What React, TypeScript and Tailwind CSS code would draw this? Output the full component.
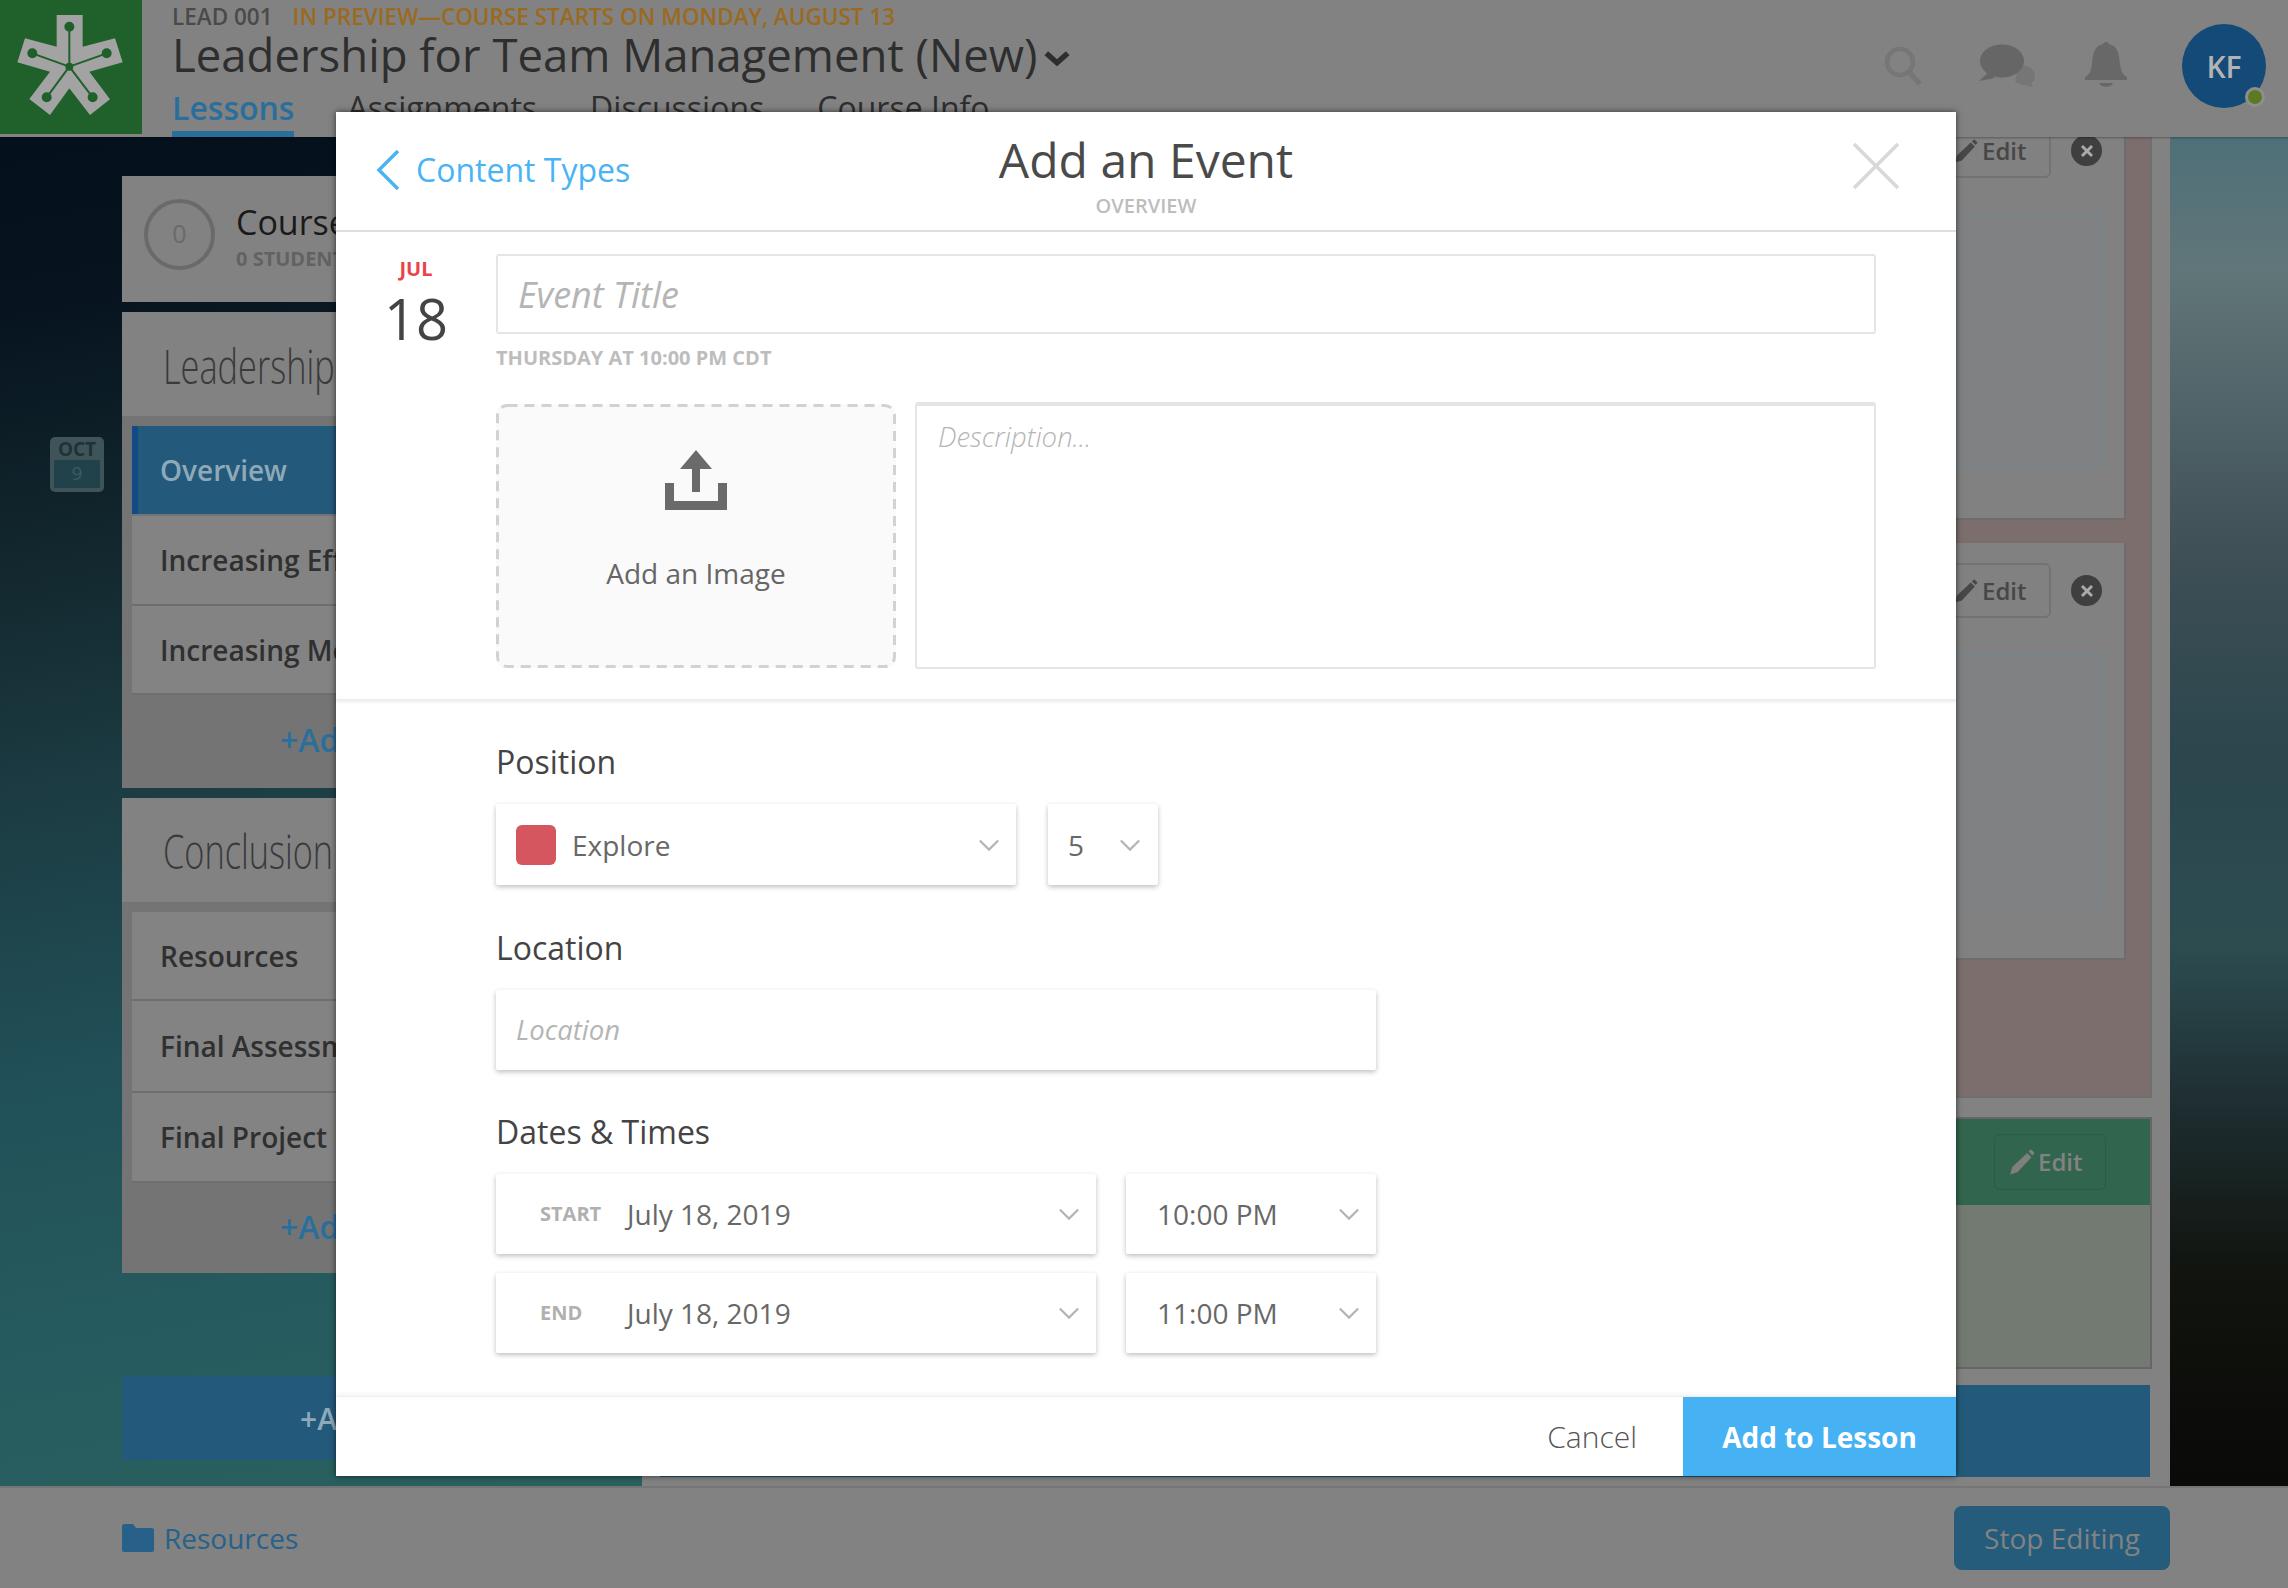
import React from "react";

const Chevron = ({ className = "" }: { className?: string }) => (
  <svg viewBox="0 0 24 14" className={`w-[22px] h-[13px] ${className}`} fill="none" stroke="#b4b4b4" strokeWidth="2.4">
    <polyline points="2,2 12,12 22,2" />
  </svg>
);

const Pencil = ({ className = "", color = "#474747" }: { className?: string; color?: string }) => (
  <svg viewBox="0 0 24 24" className={className} fill={color}>
    <path d="M1 23.5l2-7L16.8 3.6l4 4L7.8 21.4 1 23.5z" />
    <path d="M18 2.4l1.2-1.2c.6-.6 1.4-.6 2 0l1.6 1.6c.6.6.6 1.4 0 2L21.6 6 18 2.4z" />
  </svg>
);

const Logo = () => (
  <svg viewBox="0 0 426 402" className="w-[142px] h-[134px]">
    <polygon
      points="170,45 248,45 248,140 345,115 368,187 268,215 330,298 270,345 208,265 150,345 88,297 150,215 52,187 75,115 170,140"
      fill="#a3a3a3"
    />
    <g stroke="#20602a" strokeWidth="6" fill="#20602a">
      <line x1="208" y1="200" x2="208" y2="80" />
      <line x1="208" y1="200" x2="320" y2="160" />
      <line x1="208" y1="200" x2="97" y2="160" />
      <line x1="208" y1="200" x2="278" y2="292" />
      <line x1="208" y1="200" x2="140" y2="292" />
      <circle cx="208" cy="80" r="12" />
      <circle cx="320" cy="160" r="12" />
      <circle cx="97" cy="160" r="12" />
      <circle cx="278" cy="292" r="12" />
      <circle cx="140" cy="292" r="12" />
      <circle cx="208" cy="200" r="9" />
    </g>
  </svg>
);

const Row = ({ label, active = false, h }: { label: string; active?: boolean; h: string }) => (
  <div
    className={`${h} flex items-center whitespace-nowrap text-[28px] font-semibold ${
      active
        ? "bg-[#23597b] border-l-[6px] border-[#124a85] pl-[22px] text-[#8fa9b8]"
        : "bg-[#838383] border-b-2 border-[#6e6e6e] pl-[28px] text-[#303030]"
    }`}
  >
    {label}
  </div>
);

const CardToolbar = () => (
  <div className="flex items-center justify-end">
    <div className="h-[55px] w-[140px] border-2 border-[#737373] rounded-[6px] flex items-center pl-[41px] gap-[4px]">
      <Pencil className="w-[24px] h-[24px]" />
      <span className="text-[24px] font-semibold text-[#474747]">Edit</span>
    </div>
    <div className="ml-[20px] mr-[22px] w-[31px] h-[31px] rounded-full bg-[#3f3f3f] flex items-center justify-center">
      <svg viewBox="0 0 14 14" className="w-[14px] h-[14px]" stroke="#a9a9a9" strokeWidth="3">
        <line x1="2" y1="2" x2="12" y2="12" />
        <line x1="12" y1="2" x2="2" y2="12" />
      </svg>
    </div>
  </div>
);

const Card = ({ h }: { h: string }) => (
  <div className={`${h} bg-[#818181] border-r-2 border-b-2 border-[#6d6d6d] pt-[20px]`}>
    <CardToolbar />
    <div className="mt-[35px] mr-[20px] h-[255px] bg-[#7f8183] border-2 border-[#788489]" />
  </div>
);

const Select = ({ className, children, chevronClass = "right-[16px]" }: { className: string; children: React.ReactNode; chevronClass?: string }) => (
  <div className={`relative bg-white rounded-[2px] shadow-[0_2px_5px_rgba(0,0,0,0.25)] flex items-center text-[28px] text-[#686868] ${className}`}>
    {children}
    <Chevron className={`absolute top-1/2 -translate-y-1/2 ${chevronClass}`} />
  </div>
);

export default function App() {
  return (
    <div className="relative w-[2288px] h-[1588px] overflow-hidden flex flex-col font-['Open_Sans',sans-serif] bg-[#828282]">
      {/* Header */}
      <header className="relative z-10 h-[137px] shrink-0 bg-[#828282] flex shadow-[0_1px_2px_rgba(0,0,0,0.3)]">
        <div className="w-[142px] h-[134px] bg-[#20602a] shrink-0">
          <Logo />
        </div>
        <div className="ml-[30px] flex-1 relative">
          <div className="flex items-center h-[32px] pt-[2px] text-[22.5px] font-semibold leading-none whitespace-nowrap">
            <span className="text-[#4a4a4a]">LEAD 001</span>
            <span className="ml-[20px] text-[#9a6a1e]">IN PREVIEW—COURSE STARTS ON MONDAY, AUGUST 13</span>
          </div>
          <div className="flex items-center h-[46px] text-[45.5px] leading-none text-[#2e2e2e] whitespace-nowrap">
            Leadership for Team Management (New)
            <svg viewBox="0 0 24 14" className="w-[26px] h-[15px] ml-[7px] mt-[6px]" fill="none" stroke="#2e2e2e" strokeWidth="5">
              <polyline points="2,2 12,11 22,2" />
            </svg>
          </div>
          <nav className="flex h-[59px] items-start gap-[53px] pt-[8px] text-[32px] text-[#2e2e2e] whitespace-nowrap">
            <span className="h-[51px] border-b-[6px] border-[#2a6f9c] font-semibold text-[#2a6f9c] leading-[44px]">Lessons</span>
            <span className="leading-[44px]">Assignments</span>
            <span className="leading-[44px]">Discussions</span>
            <span className="leading-[44px]">Course Info</span>
          </nav>
        </div>
        <div className="flex items-center pr-[22px] pb-[5px]">
          <svg viewBox="0 0 40 40" className="w-[40px] h-[40px]" fill="none" stroke="#767676" strokeWidth="4.5">
            <circle cx="17" cy="16" r="13" />
            <line x1="26" y1="26" x2="37" y2="38" strokeWidth="5.5" />
          </svg>
          <svg viewBox="0 0 58 44" className="ml-[56px] w-[58px] h-[44px]">
            <path fill="#767676" d="M40 21c7 0 16 3 16 11 0 4-2 6-4 7l2 4-8-2c-3 0-8-2-10-4z" />
            <ellipse cx="23" cy="17" rx="22" ry="16.5" fill="#666" />
            <path fill="#666" d="M10 28L0 37l16-3z" />
          </svg>
          <svg viewBox="0 0 44 48" className="ml-[47px] w-[44px] h-[48px]" fill="#686868">
            <circle cx="22" cy="3" r="3" />
            <path d="M22 2C10 2 9 12 8 22c-1 8-3 11-7 13v3h42v-3c-4-2-6-5-7-13C35 12 34 2 22 2z" />
            <path d="M15 41h14c-2 5-12 5-14 0z" />
          </svg>
          <div className="relative ml-[54px] w-[84px] h-[84px] rounded-full bg-[#134a78] flex items-center justify-center text-[30px] font-semibold text-[#b3b3b3]">
            KF
            <span className="absolute right-[1px] bottom-[1px] w-[20px] h-[20px] rounded-full bg-[#5c7a23] border-[3px] border-[#8e8e8e]" />
          </div>
        </div>
      </header>

      {/* Body */}
      <div className="flex flex-1 min-h-0">
        <aside className="relative w-[642px] shrink-0 pl-[122px] pt-[39px] bg-[linear-gradient(170deg,#04101c_0%,#07141f_12%,#13282f_30%,#1c3b42_45%,#215058_65%,#265c5f_85%,#2a605e_100%)]">
          <div className="absolute left-[50px] top-[300px] w-[54px] h-[55px] rounded-[5px] bg-[#3e5459] flex flex-col items-center px-[4px] pb-[4px] pt-[1px]">
            <span className="text-[19px] font-bold leading-[22px] text-[#1e3238]">OCT</span>
            <span className="w-full flex-1 bg-[#21424a] text-center text-[19px] leading-[27px] text-[#3f5a60]">9</span>
          </div>

          <div className="w-[520px] flex flex-col">
            <div className="h-[126px] bg-[#828282] flex items-center pl-[22px] whitespace-nowrap">
              <div className="w-[71px] h-[71px] rounded-full border-[4px] border-[#6a6a6a] flex items-center justify-center text-[25px] text-[#6a6a6a] -mt-[10px]">0</div>
              <div className="ml-[21px] -mt-[5px]">
                <div className="text-[34px] leading-[42px] text-[#1a1a1a]">Course</div>
                <div className="mt-[3px] text-[20px] font-bold leading-[26px] text-[#626262]">0 STUDENTS</div>
              </div>
            </div>

            <div className="mt-[10px] h-[476px] bg-[#747474]">
              <div className="h-[104px] bg-[#828282] flex items-center pl-[41px] pt-[5px]">
                <span className="inline-block origin-left scale-x-[0.73] text-[47px] font-light text-[#3a3a3a] leading-none whitespace-nowrap">Leadership</span>
              </div>
              <div className="px-[10px] pt-[10px]">
                <Row label="Overview" active h="h-[88px]" />
                <div className="h-[2px]" />
                <Row label="Increasing Effectiveness" h="h-[90px]" />
                <Row label="Increasing Motivation" h="h-[89px]" />
              </div>
              <div className="pl-[158px] mt-[23px] text-[32px] font-semibold text-[#2a6f9c] leading-[44px]">+Add</div>
            </div>

            <div className="mt-[10px] h-[475px] bg-[#747474]">
              <div className="h-[104px] bg-[#828282] flex items-center pl-[41px] pt-[3px]">
                <span className="inline-block origin-left scale-x-[0.73] text-[47px] font-light text-[#3a3a3a] leading-none whitespace-nowrap">Conclusion</span>
              </div>
              <div className="px-[10px] pt-[10px]">
                <Row label="Resources" h="h-[89px]" />
                <Row label="Final Assessment" h="h-[92px]" />
                <Row label="Final Project" h="h-[90px]" />
              </div>
              <div className="pl-[158px] mt-[22px] text-[32px] font-semibold text-[#2a6f9c] leading-[44px]">+Add</div>
            </div>

            <div className="mt-[103px] h-[84px] bg-[#235a7b] flex items-center pl-[178px] text-[30px] font-semibold text-[#8fa9b8]">+Add</div>
          </div>
        </aside>

        <main className="flex-1 -mt-[34px] pl-[18px] pr-[18px] bg-[#828282] flex flex-col">
          <div className="h-[995px] bg-[#7d6e6e] border-r-2 border-b-2 border-[#6f6f6f] pr-[24px] flex flex-col gap-[23px]">
            <Card h="h-[417px]" />
            <Card h="h-[417px]" />
          </div>
          <div className="mt-[19px] h-[252px] bg-[#727a72] border-r-2 border-y-2 border-[#666]">
            <div className="h-[86px] bg-[#32654d] flex items-center justify-end pr-[44px]">
              <div className="h-[56px] w-[112px] border border-[#2c5a45] rounded-[6px] flex items-center pl-[14px] gap-[3px]">
                <Pencil className="w-[26px] h-[26px]" color="#7f7f7f" />
                <span className="text-[24px] font-semibold text-[#828282]">Edit</span>
              </div>
            </div>
          </div>
          <div className="mt-[16px] mr-[2px] h-[92px] bg-[#235a7b]" />
        </main>

        <div className="w-[118px] shrink-0 bg-[linear-gradient(180deg,#4e7078_0%,#617679_10%,#3d4e55_32%,#2b464d_46%,#2c4c50_60%,#1e2d30_72%,#11140f_84%,#0a0a08_100%)]" />
      </div>

      {/* Footer */}
      <footer className="relative h-[102px] shrink-0 bg-[#828282] border-t-2 border-[#757575] flex items-center justify-between pl-[122px] pr-[118px]">
        <div className="flex items-center gap-[10px]">
          <svg viewBox="0 0 32 28" className="w-[32px] h-[28px]" fill="#27618a">
            <path d="M0 2c0-1 1-2 2-2h9l3 4h16c1 0 2 1 2 2v20c0 1-1 2-2 2H2c-1 0-2-1-2-2z" />
          </svg>
          <span className="text-[28px] text-[#27618a]">Resources</span>
        </div>
        <div className="w-[216px] h-[64px] rounded-[8px] bg-[#255c7c] flex items-center justify-center text-[28px] text-[#828282]">Stop Editing</div>
      </footer>

      {/* Modal */}
      <div className="absolute z-20 left-[336px] top-[112px] w-[1620px] h-[1364px] bg-white shadow-[0_0_6px_rgba(0,0,0,0.6)] flex flex-col">
        <div className="relative h-[120px] shrink-0 border-b-2 border-[#dedede] flex flex-col items-center">
          <div className="absolute left-[40px] top-[37px] flex items-center">
            <svg viewBox="0 0 24 42" className="w-[24px] h-[42px]" fill="none" stroke="#4ab3f4" strokeWidth="3.5">
              <polyline points="22,2 3,21 22,40" />
            </svg>
            <span className="ml-[16px] text-[32px] text-[#4ab3f4] leading-none">Content Types</span>
          </div>
          <div className="mt-[19px] text-[48px] leading-[58px] text-[#4a4a4a]">Add an Event</div>
          <div className="mt-[5px] text-[20px] leading-[24px] font-semibold text-[#bdbdbd]">OVERVIEW</div>
          <svg viewBox="0 0 46 46" className="absolute left-[1517px] top-[31px] w-[46px] h-[46px]" stroke="#d8d8d8" strokeWidth="3.5">
            <line x1="1" y1="1" x2="45" y2="45" />
            <line x1="45" y1="1" x2="1" y2="45" />
          </svg>
        </div>

        <div className="h-[468px] shrink-0 border-b border-[#ececec] shadow-[0_2px_3px_rgba(0,0,0,0.08)] flex">
          <div className="w-[160px] shrink-0 flex flex-col items-center pt-[25px]">
            <div className="text-[20px] leading-[24px] font-bold text-[#e8444d]">JUL</div>
            <div className="text-[56px] leading-[66px] mt-[4px] text-[#444]">18</div>
          </div>
          <div className="w-[1380px] pt-[22px]">
            <div className="h-[80px] border-2 border-[#e5e5e5] rounded-[3px] flex items-center pl-[20px] pt-[2px] text-[36px] italic text-[#b5b5b5]">Event Title</div>
            <div className="mt-[11px] text-[20px] font-bold leading-[26px] text-[#bdbdbd]">THURSDAY AT 10:00 PM CDT</div>
            <div className="mt-[33px] flex gap-[19px]">
              <div className="relative w-[400px] h-[264px] shrink-0 rounded-[10px] bg-[#fafafa] flex flex-col items-center pt-[45px]">
                <svg viewBox="0 0 400 264" className="absolute inset-0 w-[400px] h-[264px]" fill="none" stroke="#d2d2d2" strokeWidth="3">
                  <rect x="1.5" y="1.5" width="397" height="261" rx="10" strokeDasharray="10 7" />
                </svg>
                <svg viewBox="0 0 64 62" className="w-[64px] h-[62px]" fill="#6a6a6a">
                  <polygon points="32,1 48,20 16,20" />
                  <rect x="28" y="19" width="8" height="24" />
                  <path d="M1 34h9v18h44V34h9v27H1z" />
                </svg>
                <div className="mt-[43px] text-[28px] leading-[38px] text-[#666]">Add an Image</div>
              </div>
              <div className="flex-1 h-[267px] -mt-[2px] border-2 border-t-[4px] border-[#e5e5e5] rounded-[3px] pl-[21px] pt-[10px] text-[27.5px] italic font-light text-[#b5b5b5]">Description...</div>
            </div>
          </div>
        </div>

        <div className="flex-1 pl-[160px] pt-[40px]">
          <div className="text-[32px] leading-[44px] text-[#444]">Position</div>
          <div className="mt-[20px] flex gap-[32px]">
            <Select className="w-[520px] h-[81px] pl-[20px]" chevronClass="right-[16px]">
              <span className="w-[40px] h-[40px] rounded-[6px] bg-[#d5565f]" />
              <span className="ml-[16px]">Explore</span>
            </Select>
            <Select className="w-[110px] h-[81px] pl-[20px]" chevronClass="right-[17px]">5</Select>
          </div>
          <div className="mt-[41px] text-[32px] leading-[44px] text-[#444]">Location</div>
          <div className="mt-[20px] w-[880px] h-[80px] bg-white rounded-[2px] shadow-[0_2px_5px_rgba(0,0,0,0.25)] flex items-center pl-[20px] text-[27.5px] italic text-[#b5b5b5]">Location</div>
          <div className="mt-[40px] text-[32px] leading-[44px] text-[#444]">Dates &amp; Times</div>
          <div className="mt-[20px] flex gap-[30px]">
            <Select className="w-[600px] h-[80px] pl-[44px]">
              <span className="w-[87px] text-[20px] font-bold text-[#b0b0b0]">START</span>
              <span>July 18, 2019</span>
            </Select>
            <Select className="w-[250px] h-[80px] pl-[31px]">10:00 PM</Select>
          </div>
          <div className="mt-[19px] flex gap-[30px]">
            <Select className="w-[600px] h-[80px] pl-[44px]">
              <span className="w-[87px] text-[20px] font-bold text-[#b0b0b0]">END</span>
              <span>July 18, 2019</span>
            </Select>
            <Select className="w-[250px] h-[80px] pl-[31px]">11:00 PM</Select>
          </div>
        </div>

        <div className="h-[80px] shrink-0 border-t border-[#eeeeee] shadow-[0_-2px_4px_rgba(0,0,0,0.05)] flex items-center justify-end">
          <span className="text-[30px] font-light text-[#555]">Cancel</span>
          <div className="ml-[46px] w-[273px] h-full bg-[#46b1f3] flex items-center justify-center text-[28px] font-bold text-white">Add to Lesson</div>
        </div>
      </div>
    </div>
  );
}
